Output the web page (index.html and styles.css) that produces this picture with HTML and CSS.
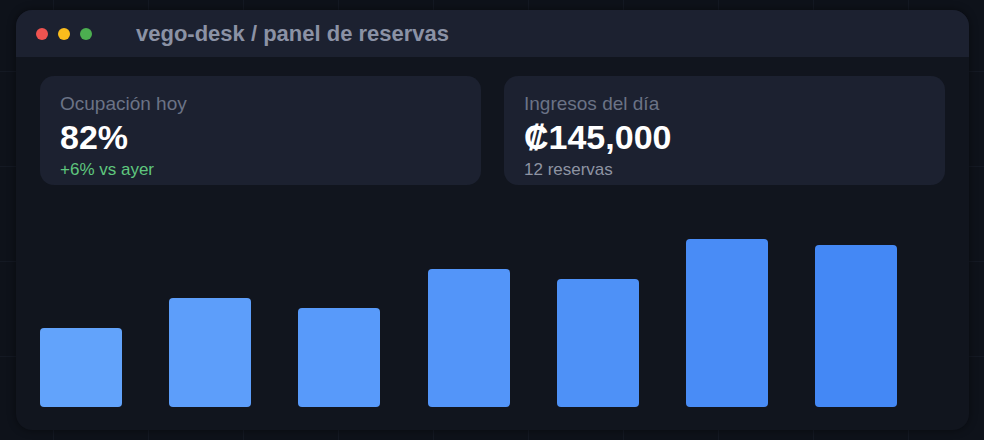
FILE: index.html
```html
<!DOCTYPE html>
<html lang="es">
<head>
    <meta charset="UTF-8">
    <meta name="viewport" content="width=device-width, initial-scale=1.0">
    <title>vego-desk / panel de reservas</title>
    <link rel="stylesheet" href="styles.css">
</head>
<body>
    <div class="window">
        <div class="titlebar">
            <div class="dots">
                <span class="dot red"></span>
                <span class="dot yellow"></span>
                <span class="dot green"></span>
            </div>
            <div class="title">vego-desk / panel de reservas</div>
        </div>
        <div class="content">
            <div class="cards">
                <div class="card">
                    <div class="card-label">Ocupación hoy</div>
                    <div class="card-value">82%</div>
                    <div class="card-sub up">+6% vs ayer</div>
                </div>
                <div class="card">
                    <div class="card-label">Ingresos del día</div>
                    <div class="card-value">₡145,000</div>
                    <div class="card-sub">12 reservas</div>
                </div>
            </div>
            <div class="chart">
                <div class="bar b1" style="height: 79px"></div>
                <div class="bar b2" style="height: 109px"></div>
                <div class="bar b3" style="height: 99px"></div>
                <div class="bar b4" style="height: 138px"></div>
                <div class="bar b5" style="height: 128px"></div>
                <div class="bar b6" style="height: 168px"></div>
                <div class="bar b7" style="height: 162px"></div>
            </div>
        </div>
    </div>
</body>
</html>
```

FILE: styles.css
```css
body {
    font-family: 'Liberation Sans', Arial, sans-serif;
    background-color: #0e121a;
    background-image:
        linear-gradient(90deg, #141923 1px, transparent 1px),
        linear-gradient(0deg, #141923 1px, transparent 1px);
    background-size: 95px 95px;
    background-position: 53px 72px;
    margin: 0;
    padding: 0;
    height: 440px;
    overflow: hidden;
}
.window {
    margin: 10px 15px 0 16px;
    height: 420px;
    background-color: #11151e;
    border-radius: 16px;
    box-shadow: 0 0 8px rgba(0, 0, 0, 0.45);
    display: flex;
    flex-direction: column;
    overflow: hidden;
}
.titlebar {
    height: 47px;
    background-color: #1c2130;
    display: flex;
    align-items: center;
    padding: 0 20px;
    flex-shrink: 0;
}
.dots {
    display: flex;
    gap: 10px;
    margin-right: 44px;
}
.dot {
    width: 12px;
    height: 12px;
    border-radius: 50%;
}
.red { background-color: #ef5350; }
.yellow { background-color: #fbbd1c; }
.green { background-color: #4caf50; }
.title {
    color: #8b92a5;
    font-weight: bold;
    font-size: 22px;
}
.content {
    flex: 1;
    display: flex;
    flex-direction: column;
    padding: 19px 24px 23px;
}
.cards {
    display: grid;
    grid-template-columns: 1fr 1fr;
    gap: 23px;
}
.card {
    background-color: #1c2130;
    border-radius: 14px;
    padding: 17px 20px 5px;
    height: 109px;
    box-sizing: border-box;
}
.card-label {
    color: #6b7386;
    font-size: 19px;
    line-height: 22px;
}
.card-value {
    color: #fff;
    font-weight: bold;
    font-size: 34px;
    line-height: 40px;
    margin-top: 2px;
}
.card-sub {
    color: #8e94a3;
    font-size: 17px;
    line-height: 20px;
    margin-top: 3px;
}
.card-sub.up {
    color: #5fc77e;
}
.chart {
    flex: 1;
    display: flex;
    align-items: flex-end;
    gap: 47.2px;
}
.bar {
    width: 82px;
    border-radius: 4px;
}
.b1 { background-color: #62a3fb; }
.b2 { background-color: #5d9efa; }
.b3 { background-color: #589afa; }
.b4 { background-color: #5395f9; }
.b5 { background-color: #4e91f7; }
.b6 { background-color: #498cf6; }
.b7 { background-color: #4488f5; }
```
